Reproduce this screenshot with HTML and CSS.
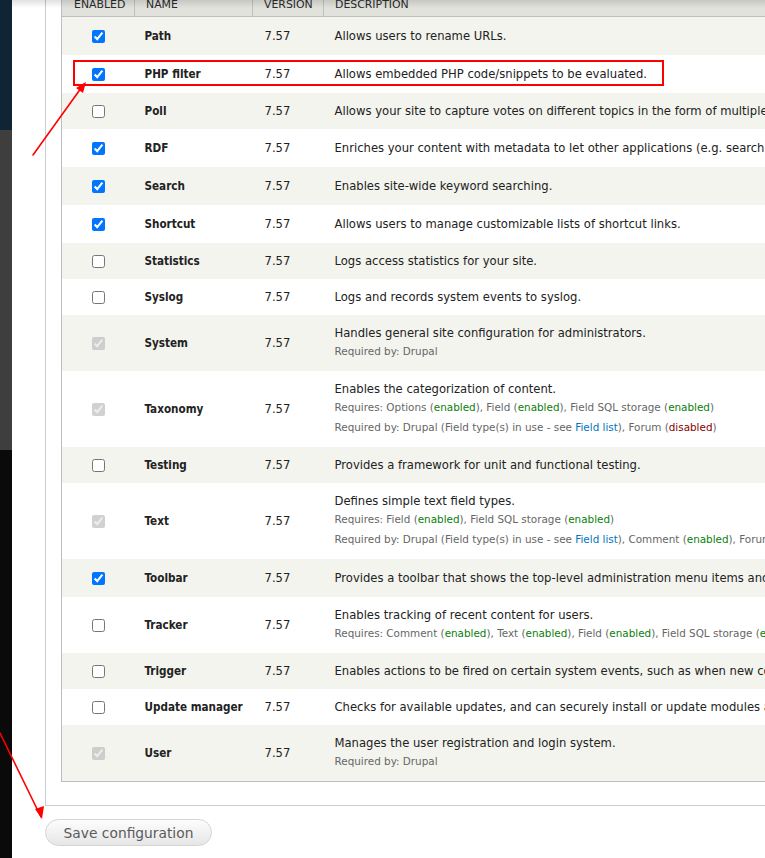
FILE: index.html
```html
<!DOCTYPE html>
<html>
<head>
<meta charset="utf-8">
<link rel="stylesheet" href="styles.css">
</head>
<body>
<div class="strip">
  <div class="strip-navy"></div>
  <div class="strip-gray"></div>
  <div class="strip-black"></div>
</div>
<div class="content">
  <div class="fieldset">
    <table class="modules">
      <colgroup>
        <col class="w-en">
        <col class="w-name">
        <col class="w-ver">
        <col class="w-desc">
      </colgroup>
      <thead>
        <tr>
          <th class="c-en">Enabled</th>
          <th class="c-name">Name</th>
          <th class="c-ver">Version</th>
          <th class="c-desc">Description</th>
        </tr>
      </thead>
      <tbody>
        <tr class="odd on"><td class="c-en"><input type="checkbox" checked></td><td class="c-name">Path</td><td class="c-ver">7.57</td><td class="c-desc"><div class="d">Allows users to rename URLs.</div></td></tr>
        <tr class="even on"><td class="c-en"><input type="checkbox" checked></td><td class="c-name">PHP filter</td><td class="c-ver">7.57</td><td class="c-desc"><div class="d">Allows embedded PHP code/snippets to be evaluated.</div></td></tr>
        <tr class="odd"><td class="c-en"><input type="checkbox"></td><td class="c-name">Poll</td><td class="c-ver">7.57</td><td class="c-desc"><div class="d">Allows your site to capture votes on different topics in the form of multiple choice questions.</div></td></tr>
        <tr class="even on"><td class="c-en"><input type="checkbox" checked></td><td class="c-name">RDF</td><td class="c-ver">7.57</td><td class="c-desc"><div class="d">Enriches your content with metadata to let other applications (e.g. search engines, aggregators) better understand its relationships and attributes.</div></td></tr>
        <tr class="odd on"><td class="c-en"><input type="checkbox" checked></td><td class="c-name">Search</td><td class="c-ver">7.57</td><td class="c-desc"><div class="d">Enables site-wide keyword searching.</div></td></tr>
        <tr class="even on"><td class="c-en"><input type="checkbox" checked></td><td class="c-name">Shortcut</td><td class="c-ver">7.57</td><td class="c-desc"><div class="d">Allows users to manage customizable lists of shortcut links.</div></td></tr>
        <tr class="odd"><td class="c-en"><input type="checkbox"></td><td class="c-name">Statistics</td><td class="c-ver">7.57</td><td class="c-desc"><div class="d">Logs access statistics for your site.</div></td></tr>
        <tr class="even"><td class="c-en"><input type="checkbox"></td><td class="c-name">Syslog</td><td class="c-ver">7.57</td><td class="c-desc"><div class="d">Logs and records system events to syslog.</div></td></tr>
        <tr class="odd"><td class="c-en"><input type="checkbox" checked disabled></td><td class="c-name">System</td><td class="c-ver">7.57</td><td class="c-desc"><div class="d">Handles general site configuration for administrators.</div><div class="req">Required by: Drupal</div></td></tr>
        <tr class="even"><td class="c-en"><input type="checkbox" checked disabled></td><td class="c-name">Taxonomy</td><td class="c-ver">7.57</td><td class="c-desc"><div class="d">Enables the categorization of content.</div><div class="req">Requires: Options (<span class="ok">enabled</span>), Field (<span class="ok">enabled</span>), Field SQL storage (<span class="ok">enabled</span>)</div><div class="req">Required by: Drupal (Field type(s) in use - see <a class="lnk">Field list</a>), Forum (<span class="off">disabled</span>)</div></td></tr>
        <tr class="odd"><td class="c-en"><input type="checkbox"></td><td class="c-name">Testing</td><td class="c-ver">7.57</td><td class="c-desc"><div class="d">Provides a framework for unit and functional testing.</div></td></tr>
        <tr class="even"><td class="c-en"><input type="checkbox" checked disabled></td><td class="c-name">Text</td><td class="c-ver">7.57</td><td class="c-desc"><div class="d">Defines simple text field types.</div><div class="req">Requires: Field (<span class="ok">enabled</span>), Field SQL storage (<span class="ok">enabled</span>)</div><div class="req">Required by: Drupal (Field type(s) in use - see <a class="lnk">Field list</a>), Comment (<span class="ok">enabled</span>), Forum (<span class="off">disabled</span>)</div></td></tr>
        <tr class="odd on"><td class="c-en"><input type="checkbox" checked></td><td class="c-name">Toolbar</td><td class="c-ver">7.57</td><td class="c-desc"><div class="d">Provides a toolbar that shows the top-level administration menu items and links from other modules.</div></td></tr>
        <tr class="even"><td class="c-en"><input type="checkbox"></td><td class="c-name">Tracker</td><td class="c-ver">7.57</td><td class="c-desc"><div class="d">Enables tracking of recent content for users.</div><div class="req">Requires: Comment (<span class="ok">enabled</span>), Text (<span class="ok">enabled</span>), Field (<span class="ok">enabled</span>), Field SQL storage (<span class="ok">enabled</span>), Options (<span class="ok">enabled</span>)</div></td></tr>
        <tr class="odd"><td class="c-en"><input type="checkbox"></td><td class="c-name">Trigger</td><td class="c-ver">7.57</td><td class="c-desc"><div class="d">Enables actions to be fired on certain system events, such as when new content is created.</div></td></tr>
        <tr class="even"><td class="c-en"><input type="checkbox"></td><td class="c-name">Update manager</td><td class="c-ver">7.57</td><td class="c-desc"><div class="d">Checks for available updates, and can securely install or update modules and themes via a web interface.</div></td></tr>
        <tr class="odd"><td class="c-en"><input type="checkbox" checked disabled></td><td class="c-name">User</td><td class="c-ver">7.57</td><td class="c-desc"><div class="d">Manages the user registration and login system.</div><div class="req">Required by: Drupal</div></td></tr>
      </tbody>
    </table>
  </div>
  <div class="actions">
    <button class="btn" type="button">Save configuration</button>
  </div>
</div>
<div class="top-shadow"></div>
<div class="highlight"></div>
<svg class="arrows" width="765" height="858" viewBox="0 0 765 858">
  <g stroke="#ff0000" stroke-width="1.6" fill="none" stroke-linecap="round">
    <line x1="33" y1="155" x2="84" y2="84"/>
    <line x1="0" y1="733" x2="41" y2="817"/>
  </g>
  <g fill="#ff0000">
    <polygon points="86,82 76,88 83,93"/>
    <polygon points="42,819 35,809 44,806"/>
  </g>
</svg>
</body>
</html>
```

FILE: styles.css
```css
html, body {
  margin: 0;
  padding: 0;
  width: 765px;
  height: 858px;
  overflow: hidden;
  background: #fff;
}
body {
  display: flex;
  font-family: "DejaVu Sans", Verdana, sans-serif;
  color: #222;
  position: relative;
}
.strip {
  width: 12px;
  flex: none;
  display: flex;
  flex-direction: column;
}
.strip-navy { height: 130px; background: #0f2536; }
.strip-gray { height: 320px; background: #3e3e3e; }
.strip-black { flex: 1; background: #0a0a0a; }

.content {
  flex: none;
  width: 1100px;
  padding-left: 33px;
}
.fieldset {
  margin-top: -42px;
  border: 1px solid #ccc;
  border-right: none;
  padding: 29px 0 23px 15px;
}
.modules {
  border-collapse: collapse;
  border: 1px solid #bebebe;
  width: 1060px;
  table-layout: fixed;
  font-size: 11.6px;
}
.w-en { width: 73px; }
.w-name { width: 118px; }
.w-ver { width: 71px; }
.w-desc { width: auto; }
.modules th {
  background: #e1e2dc;
  font-weight: normal;
  text-transform: uppercase;
  text-align: left;
  font-size: 10.9px;
  color: #2a2a2a;
  height: 23px;
  padding: 4px 10px 0 11px;
  border-left: 1px solid #bfbfbf;
  border-bottom: 1px solid #bfbfbf;
  line-height: 16px;
  vertical-align: middle;
  white-space: nowrap;
}
.modules th:first-child { border-left: none; padding-left: 12px; }
.modules td {
  padding: 10px 10px 10px 11px;
  line-height: 16px;
  vertical-align: middle;
  white-space: nowrap;
  overflow: hidden;
}
.modules tr.on td { padding-top: 11px; padding-bottom: 11px; }
.modules tr.odd td { background: #f3f4ee; }
.modules tr.even td { background: #fff; }
.modules td.c-en { text-align: center; padding: 0; }
.modules td.c-name {
  font-family: "DejaVu Sans Condensed", "DejaVu Sans", sans-serif;
  font-weight: bold;
  padding-left: 10px;
}
.modules td.c-ver { padding-left: 12px; }
.modules td.c-desc { padding-left: 11px; }
.modules td input {
  margin: 0;
  width: 13px;
  height: 13px;
  vertical-align: middle;
}
.d { line-height: 16px; }
.req {
  font-size: 10.4px;
  line-height: 20px;
  color: #666;
}
.ok { color: #098009; }
.off { color: #880000; }
.lnk { color: #0074bd; text-decoration: none; }

.actions {
  padding-top: 13px;
}
.btn {
  font-family: "DejaVu Sans", Verdana, sans-serif;
  font-size: 13.8px;
  color: #5a5a5a;
  height: 27px;
  width: 167px;
  padding: 0;
  border: 1px solid #d4d4d4;
  border-radius: 14px;
  background: linear-gradient(#fdfdfd, #e6e6e6);
}

.top-shadow {
  position: absolute;
  left: 12px;
  top: 0;
  width: 753px;
  height: 8px;
  background: linear-gradient(rgba(0,0,0,0.12), rgba(0,0,0,0));
  pointer-events: none;
}
.highlight {
  position: absolute;
  left: 73px;
  top: 60px;
  width: 587px;
  height: 22px;
  border: 2px solid #ff0000;
  pointer-events: none;
}
.arrows {
  position: absolute;
  left: 0;
  top: 0;
  pointer-events: none;
}
```
